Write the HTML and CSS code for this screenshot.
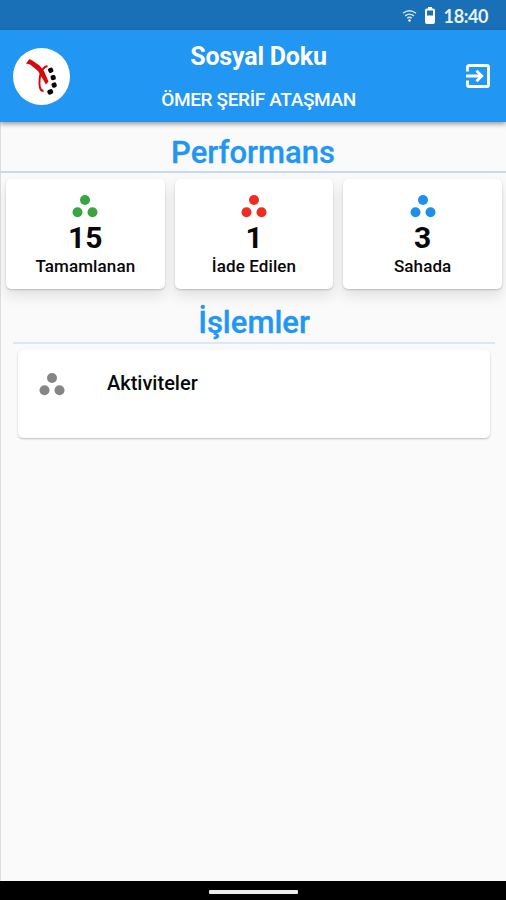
FILE: index.html
```html
<!DOCTYPE html>
<html lang="tr">
<head>
    <meta charset="UTF-8">
    <meta name="viewport" content="width=device-width, initial-scale=1.0">
    <title>Sosyal Doku</title>
    <link rel="stylesheet" href="styles.css">
</head>
<body>
    <div class="status-bar">
        <svg class="wifi" viewBox="0 0 16 14">
            <path d="M1 4.6Q8 -1 15 4.6M3.3 7.4Q8 3.6 12.7 7.4M5.6 9.9Q8 7.9 10.4 9.9"/>
            <circle cx="8" cy="12.4" r="1.3"/>
        </svg>
        <svg class="battery" viewBox="0 0 10 17">
            <path fill-rule="evenodd" d="M3 0h4v1.5h1A2 2 0 0 1 10 3.5V15a2 2 0 0 1-2 2H2a2 2 0 0 1-2-2V3.5A2 2 0 0 1 2 1.5h1zM2 3.5v5h6v-5z"/>
        </svg>
        <span class="clock">18:40</span>
    </div>

    <header class="app-bar">
        <svg class="logo" viewBox="0 0 57 57">
            <circle cx="28.5" cy="28.5" r="28.5" fill="#fff"/>
            <path d="M16.5 11L13 15.5L17 16.5L25 23L33 36.5L35.5 33.5L31 23L26.5 17.5L20 13Z" fill="#d9080c"/>
            <path d="M34.5 18Q29 19 27 28Q25 43 30.5 43" fill="none" stroke="#d9080c" stroke-width="2"/>
            <g fill="#080808">
                <rect x="35.2" y="19.7" width="5" height="5" rx="1.8" transform="rotate(-25 37.7 22.2)"/>
                <rect x="37.7" y="27.1" width="5" height="5" rx="1.8" transform="rotate(-15 40.2 29.6)"/>
                <rect x="38.6" y="34.6" width="5" height="5" rx="1.8" transform="rotate(-20 41 37)"/>
                <rect x="34.5" y="41.4" width="5.6" height="5" rx="1.8" transform="rotate(-25 37.3 44)"/>
            </g>
        </svg>
        <div class="titles">
            <h1>Sosyal Doku</h1>
            <p>ÖMER ŞERİF ATAŞMAN</p>
        </div>
        <svg class="exit" viewBox="0 0 24 24">
            <path d="M1.5 7.5V3a1.5 1.5 0 0 1 1.5-1.5h18A1.5 1.5 0 0 1 22.5 3v18a1.5 1.5 0 0 1-1.5 1.5H3A1.5 1.5 0 0 1 1.5 21v-4.5"/>
            <path d="M0 12h15M10.5 6.8L15.7 12l-5.2 5.2"/>
        </svg>
    </header>

    <main class="content">
        <section>
            <h2 class="performance-title">Performans</h2>
            <div class="cards">
                <div class="card green">
                    <svg class="dots" viewBox="0 0 26 24"><circle cx="13" cy="5" r="5"/><circle cx="5.5" cy="17.3" r="5"/><circle cx="20.5" cy="17.3" r="5"/></svg>
                    <strong>15</strong>
                    <span>Tamamlanan</span>
                </div>
                <div class="card red">
                    <svg class="dots" viewBox="0 0 26 24"><circle cx="13" cy="5" r="5"/><circle cx="5.5" cy="17.3" r="5"/><circle cx="20.5" cy="17.3" r="5"/></svg>
                    <strong>1</strong>
                    <span>İade Edilen</span>
                </div>
                <div class="card blue">
                    <svg class="dots" viewBox="0 0 26 24"><circle cx="13" cy="5" r="5"/><circle cx="5.5" cy="17.3" r="5"/><circle cx="20.5" cy="17.3" r="5"/></svg>
                    <strong>3</strong>
                    <span>Sahada</span>
                </div>
            </div>
        </section>

        <section class="actions">
            <h2>İşlemler</h2>
            <div class="action">
                <svg class="dots" viewBox="0 0 26 24"><circle cx="13" cy="5" r="5"/><circle cx="5.5" cy="17.3" r="5"/><circle cx="20.5" cy="17.3" r="5"/></svg>
                <span>Aktiviteler</span>
            </div>
        </section>
    </main>

    <div class="nav-bar"><div class="nav-handle"></div></div>
</body>
</html>
```

FILE: styles.css
```css
* {
    box-sizing: border-box;
}
body {
    margin: 0;
    height: 900px;
    display: flex;
    flex-direction: column;
    overflow: hidden;
    font-family: Roboto, sans-serif;
    background-color: #fafafa;
}
h1, h2, p {
    margin: 0;
}
.status-bar {
    height: 30px;
    flex: none;
    display: flex;
    align-items: center;
    justify-content: flex-end;
    padding: 0 18px 0 0;
    background-color: #1a70b7;
    color: #e9f3fb;
}
.wifi {
    width: 15px;
    height: 13px;
    margin-right: 8px;
    fill: #fff;
}
.wifi path {
    fill: none;
    stroke: #d5e8f7;
    stroke-width: 1.5;
}
.battery {
    width: 10px;
    height: 17px;
    margin-right: 9px;
    fill: #fff;
}
.clock {
    font-family: Lato, sans-serif;
    font-size: 18px;
    font-weight: bold;
    letter-spacing: -0.4px;
    line-height: 30px;
    padding-top: 1px;
}
.app-bar {
    height: 92px;
    flex: none;
    display: flex;
    align-items: center;
    padding: 0 16px 0 13px;
    background-color: #2196f3;
    color: white;
    box-shadow: 0 2px 5px rgba(0, 0, 0, 0.4);
    z-index: 1;
}
.logo {
    width: 57px;
    height: 57px;
}
.titles {
    flex: 1;
    text-align: center;
    padding-right: 19px;
}
.titles h1 {
    font-size: 25px;
    line-height: 30px;
    font-weight: bold;
    letter-spacing: -0.2px;
}
.titles p {
    font-size: 19px;
    line-height: 24px;
    padding-top: 1px;
    margin-top: 15px;
    font-weight: 500;
    letter-spacing: -0.35px;
}
.titles h1 {
    padding-top: 1px;
}
.exit {
    width: 24px;
    height: 24px;
    fill: none;
    stroke: #fff;
    stroke-width: 2.8;
}
.content {
    flex: 1;
    border-left: 1px solid #dedede;
}
h2 {
    color: #2196f3;
    font-size: 31px;
    line-height: 36px;
    font-weight: 500;
    -webkit-text-stroke: 0.3px #2196f3;
    text-align: center;
}
.performance-title {
    height: 51px;
    margin-left: -1px;
    padding-top: 13px;
    border-bottom: 2px solid #c6dbf1;
}
.cards {
    display: grid;
    grid-template-columns: repeat(3, 1fr);
    gap: 10px;
    padding: 6px 4px 0 5px;
}
.card {
    height: 110px;
    display: flex;
    flex-direction: column;
    align-items: center;
    padding-top: 16px;
    background-color: white;
    border-radius: 5px;
    color: #080808;
    box-shadow: 0 1px 2px rgba(0, 0, 0, 0.2), 0 7px 14px rgba(0, 0, 0, 0.1);
}
.dots {
    width: 26px;
    height: 24px;
}
.card strong {
    font-size: 30px;
    line-height: 36px;
    margin-top: 1px;
}
.card span {
    font-size: 17px;
    line-height: 20px;
    font-weight: 500;
    letter-spacing: 0.1px;
}
.green .dots {
    fill: #39a541;
}
.red .dots {
    fill: #f02b20;
}
.blue .dots {
    fill: #1e8fee;
}
.actions {
    padding: 16px 11px 0 12px;
}
.actions h2 {
    height: 39px;
    border-bottom: 2px solid #d9e7f6;
}
.action {
    height: 88px;
    margin: 6px 5px 0 5px;
    display: flex;
    align-items: flex-start;
    padding: 23px 21px 0;
    background-color: white;
    border-radius: 5px;
    box-shadow: 0 1px 2px rgba(0, 0, 0, 0.25);
}
.action .dots {
    fill: #858585;
}
.action span {
    margin-left: 42px;
    margin-top: -1px;
    font-size: 20px;
    line-height: 22px;
    font-weight: 500;
    color: #080808;
}
.nav-bar {
    height: 19px;
    flex: none;
    display: flex;
    justify-content: center;
    align-items: center;
    background-color: black;
}
.nav-handle {
    width: 89px;
    height: 4px;
    margin-top: 2px;
    border-radius: 1px;
    background-color: #ececec;
}
```
